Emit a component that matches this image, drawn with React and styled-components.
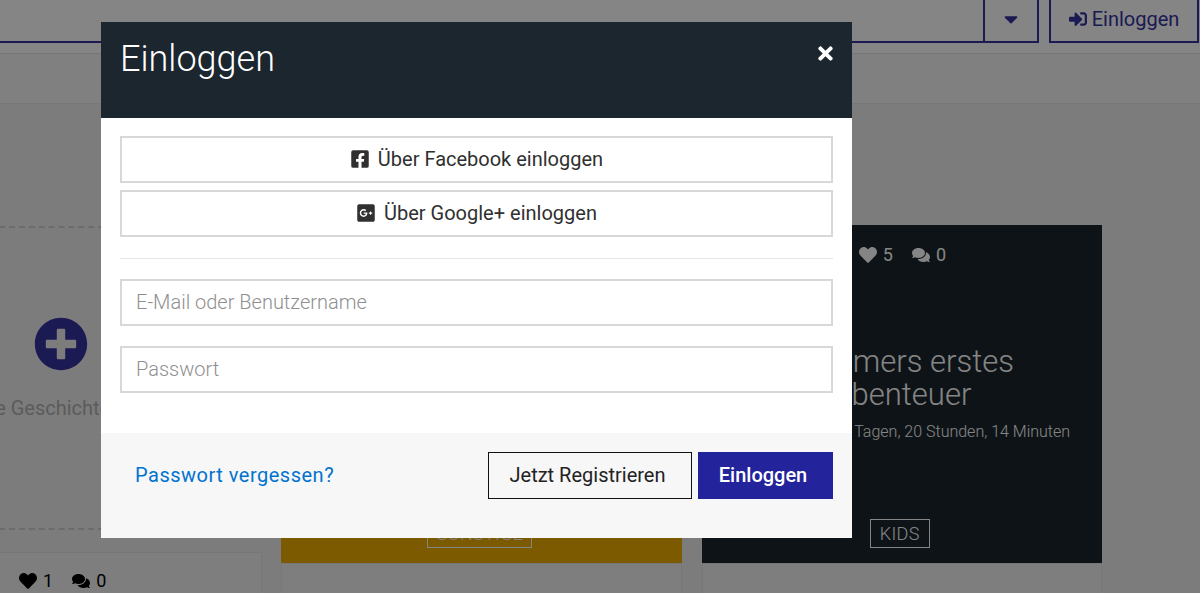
import React from 'react'
import styled, { createGlobalStyle } from 'styled-components'
import {
	FaCaretDown,
	FaComments,
	FaFacebookSquare,
	FaGooglePlusSquare,
	FaHeart,
	FaPlusCircle,
	FaSignInAlt,
	FaTimes,
} from 'react-icons/fa'

const navy = '#34329f'

const GlobalStyle = createGlobalStyle`
	html, body {
		margin: 0;
		height: 100%;
		overflow: hidden;
		font-family: Roboto, 'Liberation Sans', sans-serif;
		background: #eee;
	}
	* {
		box-sizing: border-box;
	}
`

const Page = styled.div`
	height: 593px;
	overflow: hidden;
`

const TopBar = styled.header`
	height: 54px;
	padding-bottom: 10px;
	display: flex;
	background: #fff;
	border-bottom: 1px solid #e2e2e2;
`

const TopLine = styled.div`
	flex: 1;
	border-bottom: 2px solid ${navy};
`

const CaretButton = styled.button`
	width: 56px;
	margin-right: 10px;
	padding: 0 0 3px;
	display: flex;
	align-items: center;
	justify-content: center;
	background: none;
	color: ${navy};
	font-size: 22px;
	border: 2px solid ${navy};
	border-top: 0;
`

const LoginButton = styled.button`
	width: 150px;
	margin-right: 1px;
	padding: 0 0 3px;
	display: flex;
	align-items: center;
	justify-content: center;
	gap: 5px;
	background: none;
	color: ${navy};
	font: 400 20px Roboto, sans-serif;
	border: 2px solid ${navy};
	border-top: 0;
`

const SubBar = styled.div`
	height: 50px;
	background: #f6f6f6;
	border-bottom: 1px solid #e6e6e6;
`

const Cards = styled.main`
	margin-left: -139px;
	padding-top: 121px;
	display: grid;
	grid-template-columns: 401px 401px 400px;
	column-gap: 19.4px;
`

const Column = styled.div`
	display: flex;
	flex-direction: column;
`

const NewStory = styled.div`
	height: 304px;
	margin-top: 1px;
	display: flex;
	flex-direction: column;
	align-items: center;
	justify-content: center;
	padding-bottom: 20px;
	border-top: 2px dashed #cfcfcf;
	border-bottom: 2px dashed #cfcfcf;
`

const AddIcon = styled.span`
	display: flex;
	color: ${navy};
	font-size: 54px;
	margin: 0 2px 25px 0;
`

const AddLabel = styled.span`
	font-size: 20px;
	color: #b0b0b0;
	white-space: nowrap;
`

const StoryCard = styled.article`
	height: 338px;
	padding-bottom: 15px;
	display: flex;
	flex-direction: column;
	align-items: center;
	justify-content: flex-end;
	color: #fff;
	background: ${p => p.$color};
`

const Stats = styled.div`
	display: flex;
	align-items: center;
	gap: 19px;
	padding-left: 157px;
	font-size: 18px;
	color: ${p => p.$color};
`

const Stat = styled.span`
	display: flex;
	align-items: center;
	gap: 6px;
	line-height: 20px;
`

const CardTop = styled.div`
	align-self: stretch;
	margin-bottom: auto;
	padding-top: 20px;
`

const CardTitle = styled.h3`
	margin: 0 0 11px;
	width: 300px;
	text-align: center;
	font-size: 31px;
	line-height: 33px;
	font-weight: 300;
`

const CardMeta = styled.p`
	margin: 0 6px 77px 0;
	font-size: 16px;
	line-height: 20px;
	font-weight: 300;
	white-space: nowrap;
`

const Tag = styled.span`
	height: 29px;
	margin-right: 4px;
	padding: 0 ${p => p.$pad}px;
	display: flex;
	align-items: center;
	font-size: 18px;
	font-weight: 300;
	letter-spacing: 0.3px;
	border: 1px solid currentColor;
`

const SmallCard = styled.div`
	height: 60px;
	margin-top: ${p => p.$top}px;
	padding-top: ${p => p.$pad}px;
	background: #f1f1f1;
	border: 1px solid #e4e4e4;
`

const Overlay = styled.div`
	position: fixed;
	inset: 0;
	background: rgba(0, 0, 0, 0.48);
`

const Modal = styled.section`
	width: 751px;
	margin: 22px 0 0 101px;
	background: #fff;
`

const ModalHeader = styled.div`
	height: 96px;
	padding: 17px 16px 0 19px;
	display: flex;
	align-items: flex-start;
	justify-content: space-between;
	background: #1b262e;
	color: #fff;
`

const ModalTitle = styled.h2`
	margin: 0;
	font-size: 36px;
	line-height: 41px;
	font-weight: 300;
`

const CloseButton = styled.button`
	margin-top: 4px;
	padding: 0;
	display: flex;
	background: none;
	border: 0;
	color: #fff;
	font-size: 21px;
`

const ModalBody = styled.div`
	padding: 18px 19px 40px;
	display: flex;
	flex-direction: column;
`

const SocialButton = styled.button`
	height: 47px;
	margin-bottom: 7px;
	padding: 0 0 2px;
	display: flex;
	align-items: center;
	justify-content: center;
	gap: 8px;
	background: #fff;
	color: #303030;
	font: 400 20px Roboto, sans-serif;
	border: 2px solid #d8d8d8;
`

const Divider = styled.hr`
	width: 100%;
	margin: 14px 0 20px;
	border: 0;
	border-top: 1px solid #e5e5e5;
`

const Field = styled.input`
	height: 47px;
	margin-bottom: 20px;
	padding: 0 14px 2px;
	font: 300 20px Roboto, sans-serif;
	border: 2px solid #d8d8d8;
	&::placeholder {
		color: #8f8f8f;
		opacity: 1;
	}
	&:last-child {
		margin-bottom: 0;
	}
`

const ModalFooter = styled.div`
	height: 105px;
	padding: 19px 19px 39px 34px;
	display: flex;
	align-items: center;
	gap: 6px;
	background: #f7f7f7;
`

const ForgotLink = styled.a`
	margin-right: auto;
	padding-bottom: 2px;
	color: #0073cf;
	font-size: 20px;
	letter-spacing: 0.5px;
	text-decoration: none;
`

const FooterButton = styled.button`
	width: ${p => p.$width}px;
	height: 47px;
	padding: 0 5px 2px 0;
	font: ${p => (p.$primary ? 500 : 400)} 20px Roboto, sans-serif;
	color: ${p => (p.$primary ? '#fff' : '#222')};
	background: ${p => (p.$primary ? '#23239b' : 'transparent')};
	border: 1px solid ${p => (p.$primary ? '#23239b' : '#111')};
`

const App = () => (
	<>
		<GlobalStyle />
		<Page>
			<TopBar>
				<TopLine />
				<CaretButton>
					<FaCaretDown />
				</CaretButton>
				<LoginButton>
					<FaSignInAlt size={18} />
					Einloggen
				</LoginButton>
			</TopBar>
			<SubBar />
			<Cards>
				<Column>
					<NewStory>
						<AddIcon>
							<FaPlusCircle />
						</AddIcon>
						<AddLabel>Neue Geschichte teilen</AddLabel>
					</NewStory>
					<SmallCard $top={22} $pad={18}>
						<Stats $color='#000'>
							<Stat>
								<FaHeart />1
							</Stat>
							<Stat>
								<FaComments />0
							</Stat>
						</Stats>
					</SmallCard>
				</Column>
				<Column>
					<StoryCard $color='#eeac00'>
						<Tag $pad={8}>SONSTIGE</Tag>
					</StoryCard>
					<SmallCard $top={0} $pad={0} />
				</Column>
				<Column>
					<StoryCard $color='#1b262c'>
						<CardTop>
							<Stats $color='#fff'>
								<Stat>
									<FaHeart />5
								</Stat>
								<Stat>
									<FaComments />0
								</Stat>
							</Stats>
						</CardTop>
						<CardTitle>Sommers erstes Abenteuer</CardTitle>
						<CardMeta>Veröffentlicht in 2 Tagen, 20 Stunden, 14 Minuten</CardMeta>
						<Tag $pad={9}>KIDS</Tag>
					</StoryCard>
					<SmallCard $top={0} $pad={0} />
				</Column>
			</Cards>
		</Page>
		<Overlay>
			<Modal>
				<ModalHeader>
					<ModalTitle>Einloggen</ModalTitle>
					<CloseButton aria-label='Schließen'>
						<FaTimes />
					</CloseButton>
				</ModalHeader>
				<ModalBody>
					<SocialButton>
						<FaFacebookSquare size={20} />
						Über Facebook einloggen
					</SocialButton>
					<SocialButton>
						<FaGooglePlusSquare size={20} />
						Über Google+ einloggen
					</SocialButton>
					<Divider />
					<Field placeholder='E-Mail oder Benutzername' />
					<Field type='password' placeholder='Passwort' />
				</ModalBody>
				<ModalFooter>
					<ForgotLink href='#'>Passwort vergessen?</ForgotLink>
					<FooterButton $width={204}>Jetzt Registrieren</FooterButton>
					<FooterButton $width={135} $primary>
						Einloggen
					</FooterButton>
				</ModalFooter>
			</Modal>
		</Overlay>
	</>
)

export default App
